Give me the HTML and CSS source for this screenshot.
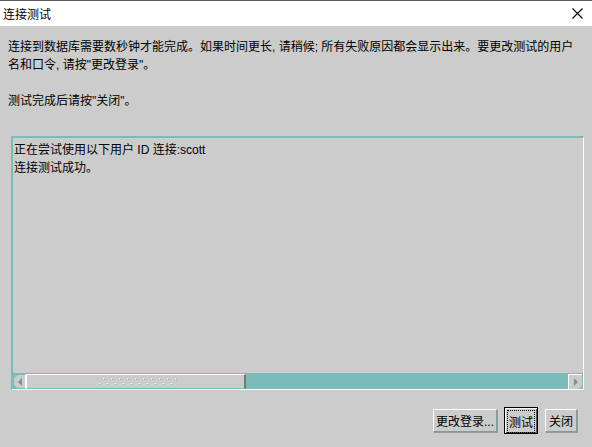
FILE: index.html
```html
<!DOCTYPE html>
<html lang="zh-CN">

<head>
    <meta charset="UTF-8">
    <title>连接测试</title>
    <link rel="stylesheet" href="styles.css">
</head>

<body>
    <div class="dialog">
        <!-- Title bar -->
        <div class="titlebar">
            <span class="title">连接测试</span>
            <svg class="close" width="11" height="11" viewBox="0 0 11 11">
                <path d="M0.5 0.5 L10.5 10.5 M10.5 0.5 L0.5 10.5" stroke="#000" stroke-width="1.1" fill="none"/>
            </svg>
        </div>

        <div class="body">
            <p class="intro">连接到数据库需要数秒钟才能完成。如果时间更长, 请稍候; 所有失败原因都会显示出来。要更改测试的用户<br>名和口令, 请按"更改登录"。</p>
            <p class="intro">测试完成后请按"关闭"。</p>

            <!-- Output area -->
            <div class="output">
                <div class="output-text">
                    <div>正在尝试使用以下用户 ID 连接:scott</div>
                    <div>连接测试成功。</div>
                </div>
                <div class="hscroll">
                    <div class="arrow left">
                        <svg width="6" height="8" viewBox="0 0 6 8"><path d="M5 0 L5 8 L1 4 Z" fill="#6f9896"/></svg>
                    </div>
                    <div class="thumb">
                        <svg class="grip" width="78" height="10" viewBox="0 0 78 10">
                            <defs>
                                <pattern id="dots" width="8" height="10" patternUnits="userSpaceOnUse">
                                    <rect x="4" y="1" width="1" height="1" fill="#fff"/>
                                    <rect x="5" y="2" width="1" height="1" fill="#7bbcba"/>
                                    <rect x="0" y="6" width="1" height="1" fill="#fff"/>
                                    <rect x="1" y="7" width="1" height="1" fill="#7bbcba"/>
                                </pattern>
                            </defs>
                            <rect width="78" height="10" fill="url(#dots)"/>
                        </svg>
                    </div>
                    <div class="track"></div>
                    <div class="arrow right">
                        <svg width="6" height="8" viewBox="0 0 6 8"><path d="M1 0 L1 8 L5 4 Z" fill="#6f9896"/></svg>
                    </div>
                </div>
            </div>

            <!-- Buttons -->
            <div class="actions">
                <button class="btn btn-login">更改登录...</button>
                <button class="btn default"><span>测试</span></button>
                <button class="btn btn-close">关闭</button>
            </div>
        </div>
    </div>
</body>

</html>
```

FILE: styles.css
```css
/* Base */
body, html {
    margin: 0;
    padding: 0;
    font-family: "Liberation Sans", "Noto Sans CJK SC", sans-serif;
    font-size: 12px;
    color: #000;
    background-color: #cccccc;
}

.dialog {
    width: 592px;
    height: 447px;
    display: flex;
    flex-direction: column;
    background-color: #cccccc;
}

/* Title bar */
.titlebar {
    height: 26px;
    box-sizing: border-box;
    border-top: 1px solid #5a5a5a;
    background-color: #fff;
    display: flex;
    align-items: center;
    justify-content: space-between;
    padding: 0 9px 0 3px;
}

.title {
    font-size: 12px;
}

/* Body */
.body {
    padding: 12px 8px 0 8px;
    display: flex;
    flex-direction: column;
}

.intro {
    margin: 0 0 18px 0;
    line-height: 18px;
    white-space: nowrap;
}

/* Output area */
.output {
    margin: 8px 0 0 3px;
    width: 573px;
    height: 254px;
    box-sizing: border-box;
    border-top: 2px solid #7bbcba;
    border-left: 2px solid #7bbcba;
    border-right: 1px solid #fff;
    border-bottom: 1px solid #fff;
    display: flex;
    flex-direction: column;
    justify-content: space-between;
}

.output-text {
    padding: 3px 1px;
    line-height: 18px;
}

.hscroll {
    height: 15px;
    display: flex;
    background-color: #7bbcba;
    border-top: 1px solid #7bbcba;
}

.arrow {
    width: 14px;
    display: flex;
    align-items: center;
    justify-content: center;
    background-color: #cccccc;
    box-sizing: border-box;
}

.arrow.left {
    border: 1px solid #7bbcba;
    border-right: 2px solid #fff;
    border-radius: 6px 0 0 6px;
}

.arrow.right {
    border-top: 1px solid #fff;
    border-left: 1px solid #fff;
    border-radius: 0 0 5px 0;
    margin-right: 1px;
}

.thumb {
    width: 219px;
    box-sizing: border-box;
    background-color: #cccccc;
    border-top: 1px solid #fff;
    border-right: 2px solid #777;
    border-bottom: 1px solid #7bbcba;
    display: flex;
    align-items: center;
    padding-left: 72px;
}

.track {
    flex: 1;
}

/* Buttons */
.actions {
    display: flex;
    justify-content: flex-end;
    align-items: center;
    gap: 7px;
    margin-top: 17px;
    padding-right: 7px;
}

.btn {
    font-family: inherit;
    font-size: 12px;
    height: 23px;
    padding: 0;
    background-color: #cccccc;
    border: 1px solid;
    border-color: #fff #7a9e9c #7a9e9c #fff;
    box-shadow: 1px 1px 0 #999;
    color: #000;
}

.btn-login {
    width: 64px;
}

.btn-close {
    width: 32px;
}

.btn.default {
    width: 34px;
    height: 27px;
    padding: 2px;
    border: 1px solid #000;
    box-shadow: inset 1px 1px 0 #fff, inset -1px -1px 0 #555;
}

.btn.default span {
    display: block;
    padding: 2px 0;
    border: 1px dotted #000;
}
```
